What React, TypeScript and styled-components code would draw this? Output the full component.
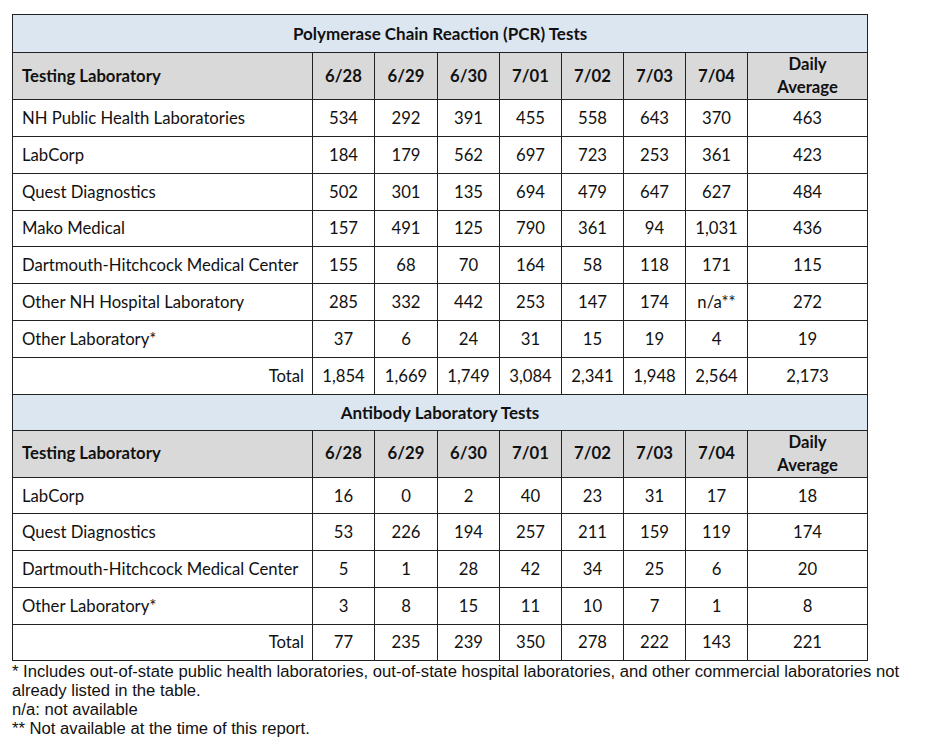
import React from "react";
import styled, { createGlobalStyle } from "styled-components";

const Global = createGlobalStyle`
  body {
    margin: 0;
    background: #ffffff;
    color: #000000;
  }
`;

const Page = styled.div`
  padding: 14px 0 0 12px;
`;

const Table = styled.table`
  border-collapse: collapse;
  table-layout: fixed;
  width: 855px;
  font-family: Lato, "Open Sans", sans-serif;
  font-size: 16.7px;
  color: #111;
`;

const TitleCell = styled.td<{ $h: number }>`
  height: ${(p) => p.$h}px;
  padding: 0;
  background: #dce6f1;
  border: 1px solid #222;
  text-align: center;
  font-weight: 700;
  font-size: 17px;
  vertical-align: middle;
`;

const HeadCell = styled.th<{ $left?: boolean; $h: number }>`
  height: ${(p) => p.$h}px;
  padding: ${(p) => (p.$left ? "0 0 0 9px" : "0")};
  background: #d9d9d9;
  border: 1px solid #222;
  text-align: ${(p) => (p.$left ? "left" : "center")};
  font-weight: 700;
  line-height: 23px;
  vertical-align: middle;
`;

const Cell = styled.td<{ $align?: "left" | "right" | "center"; $h: number }>`
  height: ${(p) => p.$h}px;
  padding: ${(p) =>
    p.$align === "left" ? "0 0 0 9px" : p.$align === "right" ? "0 8px 0 0" : "0"};
  border: 1px solid #222;
  text-align: ${(p) => p.$align ?? "center"};
  vertical-align: middle;
  white-space: nowrap;
`;

const Notes = styled.div`
  margin-top: 1px;
  font-family: "Liberation Sans", Arial, sans-serif;
  font-size: 16.65px;
  line-height: 19px;
  color: #111;
`;

const dates = ["6/28", "6/29", "6/30", "7/01", "7/02", "7/03", "7/04"];
const widths = [300, 62, 63, 62, 62, 62, 62, 62, 120];

type Row = [string, ...string[]];

const pcr: Row[] = [
  ["NH Public Health Laboratories", "534", "292", "391", "455", "558", "643", "370", "463"],
  ["LabCorp", "184", "179", "562", "697", "723", "253", "361", "423"],
  ["Quest Diagnostics", "502", "301", "135", "694", "479", "647", "627", "484"],
  ["Mako Medical", "157", "491", "125", "790", "361", "94", "1,031", "436"],
  ["Dartmouth-Hitchcock Medical Center", "155", "68", "70", "164", "58", "118", "171", "115"],
  ["Other NH Hospital Laboratory", "285", "332", "442", "253", "147", "174", "n/a**", "272"],
  ["Other Laboratory*", "37", "6", "24", "31", "15", "19", "4", "19"],
];
const pcrTotal = ["1,854", "1,669", "1,749", "3,084", "2,341", "1,948", "2,564", "2,173"];

const antibody: Row[] = [
  ["LabCorp", "16", "0", "2", "40", "23", "31", "17", "18"],
  ["Quest Diagnostics", "53", "226", "194", "257", "211", "159", "119", "174"],
  ["Dartmouth-Hitchcock Medical Center", "5", "1", "28", "42", "34", "25", "6", "20"],
  ["Other Laboratory*", "3", "8", "15", "11", "10", "7", "1", "8"],
];
const abTotal = ["77", "235", "239", "350", "278", "222", "143", "221"];

function Section({
  title,
  titleH,
  headH,
  rowH,
  rows,
  total,
}: {
  title: string;
  titleH: number;
  headH: number;
  rowH: number;
  rows: Row[];
  total: string[];
}) {
  return (
    <tbody>
      <tr>
        <TitleCell $h={titleH} colSpan={9}>
          {title}
        </TitleCell>
      </tr>
      <tr>
        <HeadCell $h={headH} $left>
          Testing Laboratory
        </HeadCell>
        {dates.map((d) => (
          <HeadCell $h={headH} key={d}>
            {d}
          </HeadCell>
        ))}
        <HeadCell $h={headH}>
          Daily
          <br />
          Average
        </HeadCell>
      </tr>
      {rows.map(([name, ...vals]) => (
        <tr key={name}>
          <Cell $h={rowH} $align="left">
            {name}
          </Cell>
          {vals.map((v, i) => (
            <Cell $h={rowH} key={i}>
              {v}
            </Cell>
          ))}
        </tr>
      ))}
      <tr>
        <Cell $h={rowH} $align="right">
          Total
        </Cell>
        {total.map((v, i) => (
          <Cell $h={rowH} key={i}>
            {v}
          </Cell>
        ))}
      </tr>
    </tbody>
  );
}

export default function App() {
  return (
    <>
      <Global />
      <Page>
        <Table>
          <colgroup>
            {widths.map((w, i) => (
              <col key={i} style={{ width: w }} />
            ))}
          </colgroup>
          <Section
            title="Polymerase Chain Reaction (PCR) Tests"
            titleH={37}
            headH={44}
            rowH={35.85}
            rows={pcr}
            total={pcrTotal}
          />
          <Section
            title="Antibody Laboratory Tests"
            titleH={35}
            headH={46}
            rowH={35.7}
            rows={antibody}
            total={abTotal}
          />
        </Table>
        <Notes>
          * Includes out-of-state public health laboratories, out-of-state hospital laboratories, and other commercial laboratories not
          <br />
          already listed in the table.
          <br />
          n/a: not available
          <br />
          ** Not available at the time of this report.
        </Notes>
      </Page>
    </>
  );
}
